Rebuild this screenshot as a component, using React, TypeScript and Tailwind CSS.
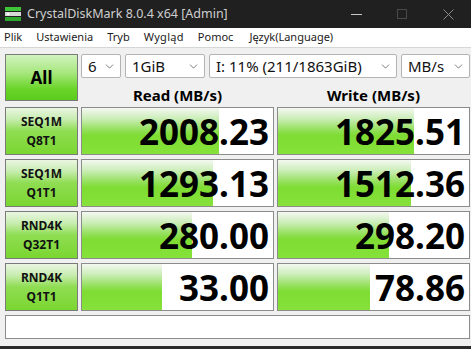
import { ChevronDown } from "lucide-react";

const font = { fontFamily: '"Noto Sans", "Open Sans", sans-serif' };

interface Row {
  a: string;
  b: string;
  read: string;
  write: string;
  rw: number;
  ww: number;
}

const rows: Row[] = [
  { a: "SEQ1M", b: "Q8T1", read: "2008.23", write: "1825.51", rw: 137, ww: 136 },
  { a: "SEQ1M", b: "Q1T1", read: "1293.13", write: "1512.36", rw: 131, ww: 133 },
  { a: "RND4K", b: "Q32T1", read: "280.00", write: "298.20", rw: 110, ww: 111 },
  { a: "RND4K", b: "Q1T1", read: "33.00", write: "78.86", rw: 80, ww: 92 },
];

const barBg =
  "bg-[linear-gradient(to_bottom,#f4f8f1_0%,#cdeebb_22%,#93e05a_48%,#7edc32_60%,#86e23a_100%)]";

function Combo({ w, label }: { w: string; label: string }) {
  return (
    <div className={`${w} h-[24px] bg-white border border-[#b4b4b4] rounded-[2px] flex items-center justify-between pl-[6px] pr-[4px]`}>
      <span className="text-[15px] text-[#111]">{label}</span>
      <ChevronDown size={13} strokeWidth={1.5} className="text-[#606060]" />
    </div>
  );
}

function Value({ text, bar }: { text: string; bar: number }) {
  return (
    <div className="relative h-[48px] bg-white border border-[#8c8c8c] flex items-center justify-end pr-[4px]">
      <div className={`absolute left-0 top-0 bottom-0 ${barBg}`} style={{ width: bar }} />
      <span className="relative text-[35px] font-bold leading-none text-black">{text}</span>
    </div>
  );
}

export default function App() {
  return (
    <div className="w-[471px] h-[349px] bg-[#f0f0f0] flex flex-col overflow-hidden" style={font}>
      <div className="h-[28px] bg-[#202020] flex items-center shrink-0">
        <svg width="16" height="14" viewBox="0 0 16 14" className="ml-[5px] mr-[6px]">
          <rect x="0" y="0" width="16" height="4" fill="#3fc43a" />
          <rect x="0" y="5" width="16" height="4" fill="#d8d8d8" />
          <rect x="2" y="6" width="2" height="2" fill="#ffffff" />
          <rect x="0" y="10" width="16" height="4" fill="#2fa62c" />
        </svg>
        <span className="text-[12.5px] text-[#cfcfcf]">CrystalDiskMark 8.0.4 x64 [Admin]</span>
        <div className="ml-auto flex items-center h-full">
          <div className="w-[46px] h-full flex items-center justify-center">
            <div className="w-[11px] h-px bg-[#c8c8c8]" />
          </div>
          <div className="w-[46px] h-full flex items-center justify-center">
            <div className="w-[10px] h-[10px] border border-[#4a4a4a]" />
          </div>
          <div className="w-[46px] h-full flex items-center justify-center">
            <svg width="11" height="11" viewBox="0 0 11 11">
              <path d="M0.5 0.5 L10.5 10.5 M10.5 0.5 L0.5 10.5" stroke="#8a8a8a" strokeWidth="1" />
            </svg>
          </div>
        </div>
      </div>

      <div className="h-[20px] bg-white border-b border-[#d6d6d6] flex items-center gap-[14px] pl-[4px] text-[11px] text-[#1a1a1a] shrink-0">
        <span>Plik</span>
        <span>Ustawienia</span>
        <span>Tryb</span>
        <span className="tracking-[0.3px]">Wygląd</span>
        <span>Pomoc</span>
        <span className="ml-[2px]">Język(Language)</span>
      </div>

      <div className="flex flex-col pl-[5px] pt-[6px] pr-[1px]">
        <div className="flex gap-[3px]">
          <div className="w-[73px] h-[47px] border border-[#7a7a7a] bg-[linear-gradient(to_bottom,#d2f3bf_0%,#a6e77c_40%,#6bd52a_75%,#5acb1c_100%)] flex items-center justify-center">
            <span className="text-[17px] font-bold text-black">All</span>
          </div>
          <div className="flex flex-col">
            <div className="flex gap-[4px]">
              <Combo w="w-[40px]" label="6" />
              <Combo w="w-[80px]" label="1GiB" />
              <Combo w="w-[188px]" label="I: 11% (211/1863GiB)" />
              <Combo w="w-[69px]" label="MB/s" />
            </div>
            <div className="flex h-[24px] items-start pt-[7px]">
              <div className="w-[193px] text-center text-[15px] leading-[20px] font-bold text-black">Read (MB/s)</div>
              <div className="w-[3px]" />
              <div className="w-[193px] text-center text-[15px] leading-[20px] font-bold text-black">Write (MB/s)</div>
            </div>
          </div>
        </div>

        <div className="flex flex-col gap-[4px] mt-[5px]">
          {rows.map((r, i) => (
            <div key={i} className="grid grid-cols-[73px_193px_193px] gap-[3px]">
              <div className="h-[48px] border border-[#7a7a7a] bg-[linear-gradient(to_bottom,#eaf6e2_0%,#c6ecae_25%,#8fdd52_50%,#7ad630_100%)] flex flex-col items-center justify-center leading-[19px]">
                <span className="text-[12px] font-bold text-[#111]">{r.a}</span>
                <span className="text-[12px] font-bold text-[#111]">{r.b}</span>
              </div>
              <Value text={r.read} bar={r.rw} />
              <Value text={r.write} bar={r.ww} />
            </div>
          ))}
        </div>

        <div className="mt-[4px] h-[24px] w-[465px] bg-white border border-[#8c8c8c]" />
      </div>
      <div className="mt-auto h-[3px] bg-[#2a2a2a]" />
    </div>
  );
}
